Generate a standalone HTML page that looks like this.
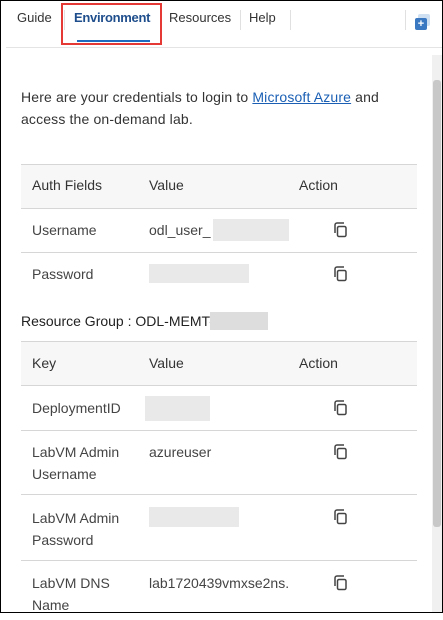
<!DOCTYPE html>
<html><head><style>
*{box-sizing:border-box;margin:0;padding:0}
body{width:443px;height:613px;overflow:hidden;background:#fff;font-family:"Segoe UI","Liberation Sans",sans-serif;color:#333;position:relative}
.frame{position:absolute;left:0;top:0;width:443px;height:613px;border:1px solid #000;z-index:10;pointer-events:none}
.tab{position:absolute;top:10px;font-size:13px;color:#333}
.sep{position:absolute;top:10px;width:1px;height:20px;background:#e0e0e0}
.abs{position:absolute}
.row{position:absolute;left:21px;width:396px;border-top:1px solid #d6d6d6;font-size:14px}
.row span{position:absolute}
.gray{position:absolute;background:#e9e9e9}
.cp{position:absolute;left:332px;width:16px;height:16px}
</style></head><body>
<div class="frame"></div>
<div class="tab" style="left:17px">Guide</div>
<div class="sep" style="left:64px"></div>
<div class="tab" style="left:74px;color:#1f4e8c;font-weight:600;letter-spacing:-0.3px">Environment</div>
<div class="abs" style="left:77px;top:40px;width:73px;height:2px;background:#1e6bbf"></div>
<div class="abs" style="left:61px;top:3px;width:101px;height:42px;border:2px solid #e53935"></div>
<div class="tab" style="left:169px">Resources</div>
<div class="sep" style="left:240px"></div>
<div class="tab" style="left:249px">Help</div>
<div class="sep" style="left:290px"></div>
<div class="sep" style="left:405px"></div>
<div class="abs" style="left:418px;top:14px;width:12px;height:12px;background:#cfe0f2;border-radius:2px"></div>
<div class="abs" style="left:415px;top:18px;width:12px;height:12px;background:#3a78c2;border-radius:2px;color:#fff;font-size:11px;line-height:12px;text-align:center;font-weight:bold">+</div>
<div class="abs" style="left:6px;top:47px;width:437px;height:1px;background:#e4e4e4"></div>
<div class="abs" style="left:432px;top:55px;width:10px;height:557px;background:#f0f0f0"></div>
<div class="abs" style="left:433px;top:80px;width:8px;height:447px;background:#c8c8c8;border-radius:3px"></div>
<div class="abs" style="left:21px;top:86px;font-size:14px;line-height:22px;width:390px;letter-spacing:0.15px">Here are your credentials to login to <span style="color:#1a5fb4;text-decoration:underline">Microsoft Azure</span> and access the on-demand lab.</div>

<div class="row" style="top:164px;height:44px;background:#f7f7f7"><span style="left:11px;top:12px">Auth Fields</span><span style="left:128px;top:12px">Value</span><span style="left:278px;top:12px">Action</span></div>
<div class="row" style="top:208px;height:44px"><span style="left:11px;top:13px;color:#444">Username</span><span style="left:128px;top:13px;color:#444">odl_user_</span></div>
<div class="gray" style="left:213px;top:219px;width:76px;height:22px"></div>
<div class="row" style="top:252px;height:44px;border-bottom:0"><span style="left:11px;top:13px;color:#444">Password</span></div>
<div class="gray" style="left:149px;top:264px;width:100px;height:19px"></div>
<div class="abs" style="left:21px;top:313px;font-size:14px;color:#222">Resource Group : ODL-MEMT-</div>
<div class="gray" style="left:210px;top:312px;width:58px;height:18px;background:#ddd"></div>

<div class="row" style="top:341px;height:44px;background:#f7f7f7"><span style="left:11px;top:13px">Key</span><span style="left:128px;top:13px">Value</span><span style="left:278px;top:13px">Action</span></div>
<div class="row" style="top:385px;height:45px"><span style="left:11px;top:14px;color:#444">DeploymentID</span></div>
<div class="gray" style="left:145px;top:396px;width:65px;height:25px"></div>
<div class="row" style="top:430px;height:64px"><span style="left:11px;top:10px;color:#444;line-height:22px">LabVM Admin<br>Username</span><span style="left:128px;top:10px;color:#444;line-height:22px">azureuser</span></div>
<div class="row" style="top:494px;height:66px"><span style="left:11px;top:12px;color:#444;line-height:22px">LabVM Admin<br>Password</span></div>
<div class="gray" style="left:149px;top:507px;width:90px;height:20px"></div>
<div class="row" style="top:560px;height:60px"><span style="left:11px;top:11px;color:#444;line-height:22px">LabVM DNS<br>Name</span><span style="left:128px;top:11px;color:#444;line-height:22px">lab1720439vmxse2ns.</span></div>

<svg class="cp" style="top:222px" viewBox="0 0 16 16"><path d="M3 11V3A2 2 0 0 1 5 1H12" fill="none" stroke="#444" stroke-width="1.5"/><rect x="5.5" y="4.5" width="8.5" height="10" rx="1.5" fill="#fff" stroke="#444" stroke-width="1.5"/></svg>
<svg class="cp" style="top:266px" viewBox="0 0 16 16"><path d="M3 11V3A2 2 0 0 1 5 1H12" fill="none" stroke="#444" stroke-width="1.5"/><rect x="5.5" y="4.5" width="8.5" height="10" rx="1.5" fill="#fff" stroke="#444" stroke-width="1.5"/></svg>
<svg class="cp" style="top:400px" viewBox="0 0 16 16"><path d="M3 11V3A2 2 0 0 1 5 1H12" fill="none" stroke="#444" stroke-width="1.5"/><rect x="5.5" y="4.5" width="8.5" height="10" rx="1.5" fill="#fff" stroke="#444" stroke-width="1.5"/></svg>
<svg class="cp" style="top:444px" viewBox="0 0 16 16"><path d="M3 11V3A2 2 0 0 1 5 1H12" fill="none" stroke="#444" stroke-width="1.5"/><rect x="5.5" y="4.5" width="8.5" height="10" rx="1.5" fill="#fff" stroke="#444" stroke-width="1.5"/></svg>
<svg class="cp" style="top:509px" viewBox="0 0 16 16"><path d="M3 11V3A2 2 0 0 1 5 1H12" fill="none" stroke="#444" stroke-width="1.5"/><rect x="5.5" y="4.5" width="8.5" height="10" rx="1.5" fill="#fff" stroke="#444" stroke-width="1.5"/></svg>
<svg class="cp" style="top:575px" viewBox="0 0 16 16"><path d="M3 11V3A2 2 0 0 1 5 1H12" fill="none" stroke="#444" stroke-width="1.5"/><rect x="5.5" y="4.5" width="8.5" height="10" rx="1.5" fill="#fff" stroke="#444" stroke-width="1.5"/></svg>
</body></html>
